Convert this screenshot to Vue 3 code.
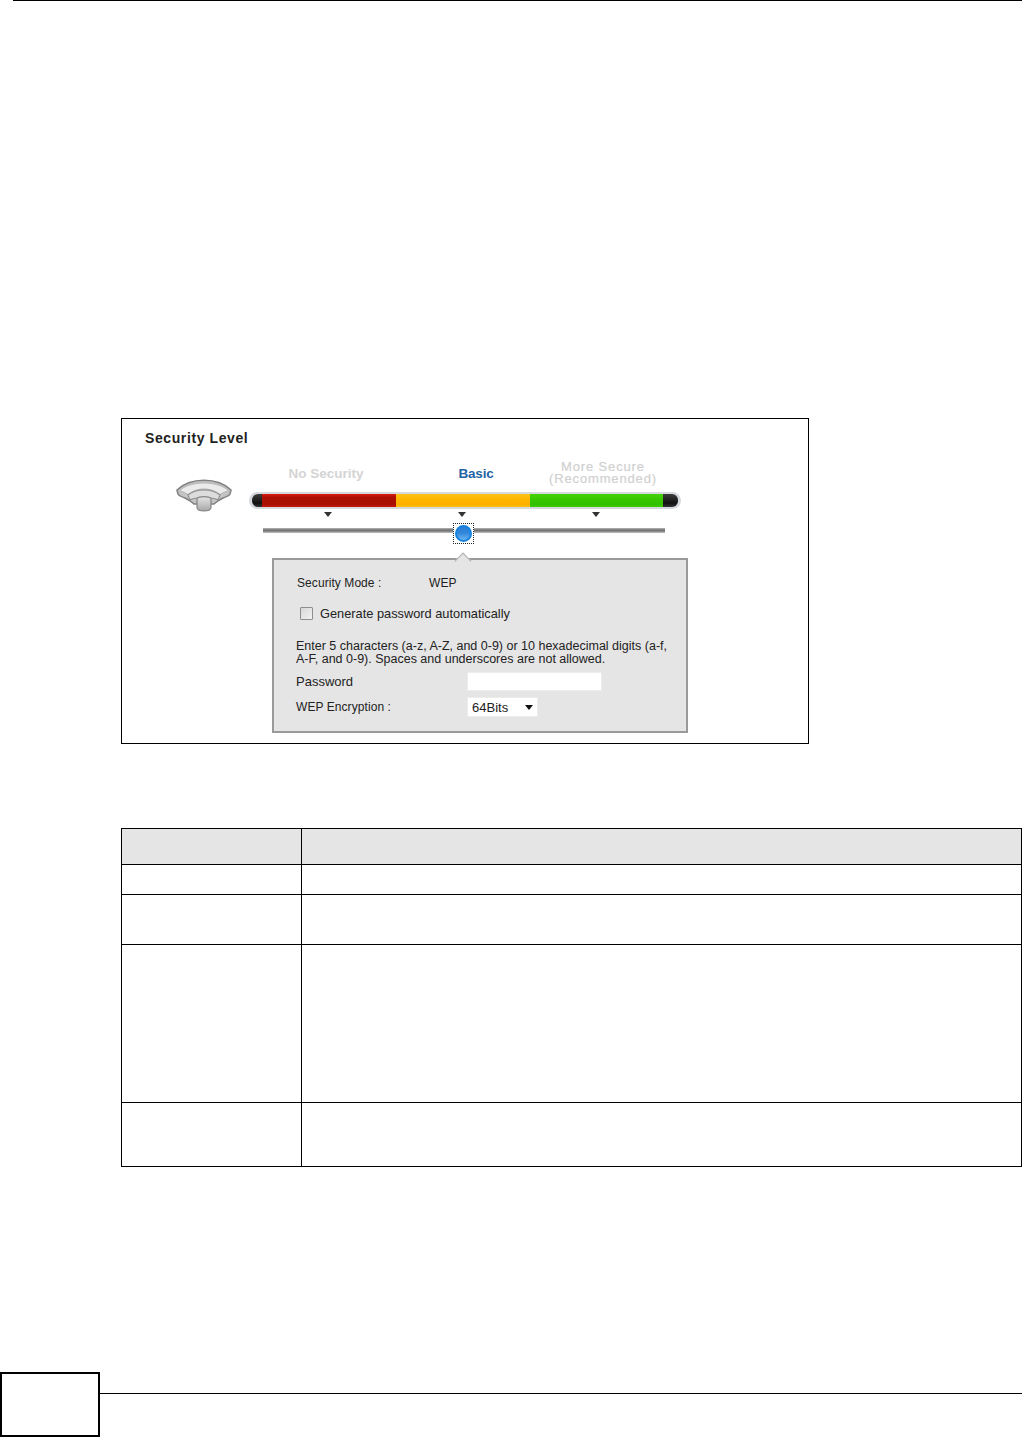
<template>
  <div class="page">
    <div class="top-rule"></div>

    <section class="figure">
      <h3 class="fig-title">Security Level</h3>

      <div class="level-row">
        <svg class="wifi" width="58" height="34" viewBox="0 0 58 34" aria-hidden="true">
          <defs>
            <linearGradient id="wifiFill" x1="0" y1="0" x2="0" y2="1">
              <stop offset="0" stop-color="#e4e4e4" />
              <stop offset="1" stop-color="#a8a8a8" />
            </linearGradient>
          </defs>
          <!-- outer fan -->
          <path d="M2 11 C9 4 19 1.2 29 1.2 C39 1.2 49 4 56 11 L55 15 C54 17 51 18 48 19 C44 21 41 23 39 25 L19 25 C17 23 14 21 10 19 C7 18 4 17 3 15 Z" fill="#c4c4c4" stroke="#828282" stroke-width="1.6" />
          <path d="M4.5 11.5 C11 6 20 4 29 4 C38 4 47 6 53.5 11.5 C50 13 47 14 45 15.5 C40 11.5 35 10 29 10 C23 10 18 11.5 13 15.5 C11 14 8 13 4.5 11.5 Z" fill="#ebebeb" stroke="#ababab" stroke-width="0.8" />
          <!-- inner band -->
          <path d="M13 16 C18 12 23 11 29 11 C35 11 40 12 45 16 L43 21 C38 18 20 18 15 21 Z" fill="#dcdcdc" stroke="#8e8e8e" stroke-width="1.1" />
          <!-- stem -->
          <path d="M22 19.5 C24 17 34 17 36 19.5 L36 28 C36 33.2 22 33.2 22 28 Z" fill="url(#wifiFill)" stroke="#868686" stroke-width="1.2" />
        </svg>

        <div class="meter">
          <div class="level-labels">
            <span class="lab lab-none">No Security</span>
            <span class="lab lab-basic">Basic</span>
            <span class="lab lab-more">More Secure<br />(Recommended)</span>
          </div>
          <div class="bar">
            <i class="cap cap-l"></i>
            <i class="seg red"></i>
            <i class="seg orange"></i>
            <i class="seg green"></i>
            <i class="cap cap-r"></i>
          </div>
          <div class="ticks">
            <i class="tick"></i>
            <i class="tick"></i>
            <i class="tick"></i>
          </div>
          <div class="slider">
            <div class="track"></div>
            <div class="thumb"><i></i></div>
          </div>
        </div>
      </div>

      <div class="panel">
        <i class="caret"></i>
        <div class="mode-row">
          <span class="mode-label">Security Mode :</span>
          <span>WEP</span>
        </div>
        <label class="check-row">
          <i class="check"></i>
          <span>Generate password automatically</span>
        </label>
        <p class="hint">
          Enter 5 characters (a-z, A-Z, and 0-9) or 10 hexadecimal digits (a-f,<br />
          A-F, and 0-9). Spaces and underscores are not allowed.
        </p>
        <div class="form-row pass-row">
          <span class="form-label pass-label">Password</span>
          <div class="input"></div>
        </div>
        <div class="form-row enc-row">
          <span class="form-label">WEP Encryption :</span>
          <div class="select"><span>64Bits</span><i class="arrow"></i></div>
        </div>
      </div>
    </section>

    <div class="table">
      <div v-for="(row, i) in rows" :key="i" class="row" :class="{ head: i === 0 }" :style="{ height: row + 'px' }">
        <div class="cell first"></div>
        <div class="cell"></div>
      </div>
    </div>

    <footer class="footer">
      <div class="page-box"></div>
      <div class="foot-rule"></div>
    </footer>
  </div>
</template>

<script setup>
const rows = [36, 30, 50, 158, 64]
</script>

<style>
html,
body {
  margin: 0;
  background: #fff;
}
</style>

<style scoped>
.page {
  position: relative;
  width: 1022px;
  height: 1437px;
  overflow: hidden;
  background: #fff;
  font-family: "Liberation Sans", Arial, sans-serif;
  color: #1c1c1c;
}
.top-rule {
  height: 1px;
  margin-left: 13px;
  background: #000;
}
.figure {
  box-sizing: border-box;
  width: 688px;
  height: 326px;
  margin: 417px 0 0 121px;
  border: 1px solid #000;
  padding: 11px 0 0 23px;
}
.fig-title {
  margin: 0;
  font-size: 14px;
  line-height: 17px;
  font-weight: 700;
  color: #222;
  letter-spacing: 0.6px;
}
.level-row {
  display: flex;
  align-items: flex-start;
  margin-top: 3px;
}
.wifi {
  flex: none;
  margin: 29px 0 0 30px;
}
.meter {
  width: 436px;
  margin-left: 16px;
}
.level-labels {
  position: relative;
  height: 42px;
  font-size: 13.5px;
  font-weight: 700;
}
.lab {
  position: absolute;
  text-align: center;
  white-space: nowrap;
  line-height: 12px;
  transform: translateX(-50%);
}
.lab-none {
  left: 77px;
  top: 18px;
  color: #d4d4d4;
}
.lab-basic {
  left: 227px;
  top: 18px;
  color: #1f63a5;
  letter-spacing: -0.2px;
}
.lab-more {
  left: 354px;
  top: 11px;
  color: #d0d0d0;
  font-size: 13px;
  font-weight: 400;
  letter-spacing: 0.85px;
  -webkit-text-stroke: 0.2px #d0d0d0;
}
.bar {
  display: flex;
  box-sizing: border-box;
  width: 432px;
  height: 17px;
  padding: 2px 3px;
  border-radius: 9px;
  background: #d5d8dc;
}
.bar i {
  display: block;
  height: 13px;
}
.cap {
  background: linear-gradient(#3c3c3c, #111 70%, #333);
}
.cap-l {
  width: 10px;
  border-radius: 6px 0 0 6px;
}
.cap-r {
  width: 15px;
  border-radius: 0 6px 6px 0;
}
.seg {
  width: 134px;
}
.red {
  background: linear-gradient(#de1a0e, #ad0f04 25%, #a80e03 80%, #c9150a);
}
.orange {
  background: linear-gradient(#ffc31b, #feb600 40%, #fdb000 80%, #ffbe12);
}
.green {
  width: 133px;
  background: linear-gradient(#46d208, #38c800 40%, #32bf00 80%, #40cc06);
}
.ticks {
  display: flex;
  align-items: flex-start;
  gap: 126px;
  box-sizing: border-box;
  height: 14px;
  margin-left: 75px;
  padding-top: 3px;
}
.tick {
  display: block;
  width: 0;
  height: 0;
  border-style: solid;
  border-width: 5px 4px 0;
  border-color: #333 transparent transparent;
}
.slider {
  position: relative;
  width: 402px;
  height: 21px;
  margin: 0 0 0 14px;
}
.track {
  position: absolute;
  top: 5px;
  left: 0;
  right: 0;
  height: 5px;
  background: linear-gradient(#b4b4b4, #6f6f6f 45%, #7d7d7d 60%, #c4c4c4);
}
.thumb {
  position: absolute;
  left: 190px;
  top: 0;
  box-sizing: border-box;
  width: 21px;
  height: 21px;
  border: 1px dotted #222;
  background: #fff;
  padding: 1px;
}
.thumb i {
  display: block;
  box-sizing: border-box;
  width: 17px;
  height: 17px;
  border-radius: 50%;
  border: 2px solid #1582e0;
  background: linear-gradient(#2f7fd6, #2f86dc 45%, #6db4f2);
}
.panel {
  position: relative;
  box-sizing: border-box;
  width: 416px;
  height: 175px;
  margin: 14px 0 0 127px;
  padding: 17px 0 0 22px;
  border: 2px solid #9a9a9a;
  background: #e5e5e5;
  font-size: 12px;
  line-height: 13px;
  color: #222;
}
.caret {
  position: absolute;
  left: 183px;
  top: -5px;
  width: 12px;
  height: 12px;
  box-sizing: border-box;
  transform: rotate(45deg);
  background: #e5e5e5;
  border-top: 1px solid #b0b0b0;
  border-left: 1px solid #b0b0b0;
}
.mode-row {
  position: relative;
  display: flex;
  padding-left: 1px;
  letter-spacing: 0.07px;
}
.mode-label {
  width: 132px;
}
.check-row {
  display: flex;
  align-items: center;
  gap: 7px;
  height: 14px;
  margin: 16px 0 0 4px;
  font-size: 12.8px;
}
.check {
  display: block;
  box-sizing: border-box;
  width: 13px;
  height: 13px;
  border: 1px solid #8e8e8e;
  border-radius: 1px;
  background: linear-gradient(135deg, #d8d8d8, #f2f2f2);
}
.hint {
  margin: 20px 0 0;
  font-size: 12.5px;
  white-space: nowrap;
}
.form-row {
  display: flex;
  align-items: center;
}
.form-label {
  width: 171px;
  flex: none;
  letter-spacing: 0.07px;
}
.pass-label {
  font-size: 13px;
  letter-spacing: 0;
}
.pass-row {
  margin-top: 6px;
}
.enc-row {
  margin-top: 6px;
}
.input {
  width: 135px;
  height: 19px;
  background: #fff;
  border: 1px solid #ececec;
  box-sizing: border-box;
}
.select {
  position: relative;
  box-sizing: border-box;
  width: 71px;
  height: 20px;
  padding: 3px 0 0 4px;
  background: #fff;
  border: 1px solid #ececec;
  font-size: 13px;
}
.arrow {
  position: absolute;
  right: 4px;
  top: 7px;
  width: 0;
  height: 0;
  border-style: solid;
  border-width: 5px 4px 0;
  border-color: #111 transparent transparent;
}
.table {
  box-sizing: border-box;
  width: 901px;
  margin: 84px 0 0 121px;
  border-top: 1px solid #000;
  border-left: 1px solid #000;
}
.row {
  display: flex;
  box-sizing: border-box;
  border-bottom: 1px solid #000;
}
.head {
  background: #e5e5e5;
}
.cell {
  flex: 1;
  box-sizing: border-box;
  border-right: 1px solid #000;
}
.first {
  flex: none;
  width: 180px;
}
.footer {
  position: relative;
  margin-top: 205px;
  height: 65px;
}
.page-box {
  position: absolute;
  left: 0;
  top: 0;
  box-sizing: border-box;
  width: 100px;
  height: 65px;
  border: 2px solid #000;
}
.foot-rule {
  position: absolute;
  left: 100px;
  right: 0;
  top: 21px;
  height: 1px;
  background: #000;
}
</style>
